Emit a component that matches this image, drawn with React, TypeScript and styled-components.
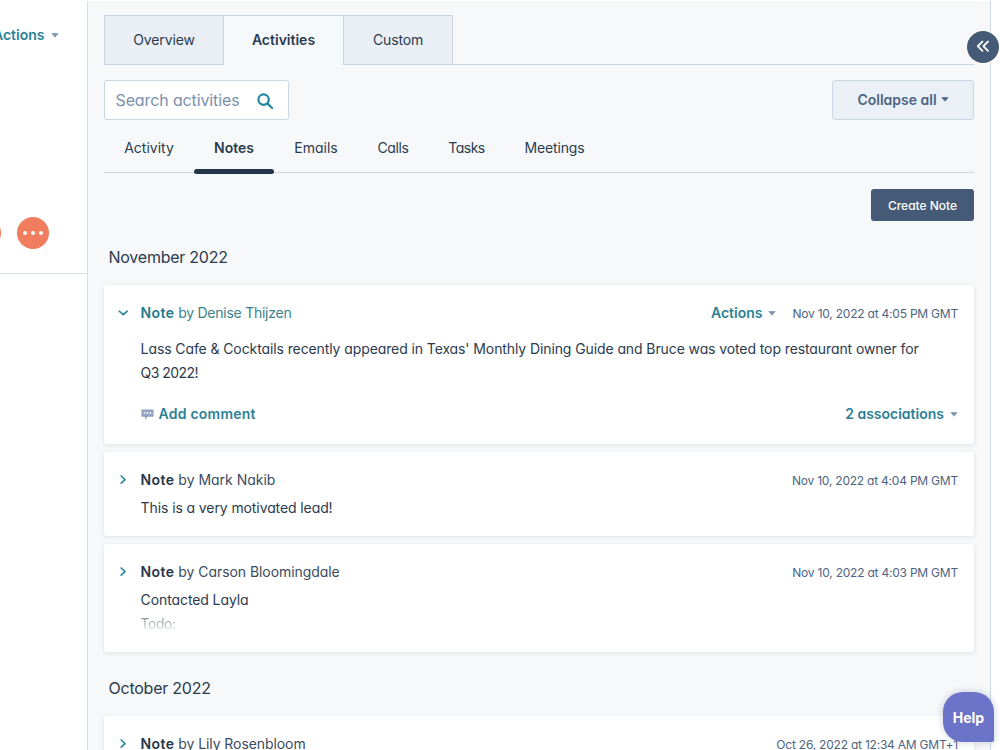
import React from 'react';
import styled, { createGlobalStyle } from 'styled-components';

const Global = createGlobalStyle`
  * { box-sizing: border-box; }
  html, body { margin: 0; height: 100%; overflow: hidden; }
  body {
    background: #fff;
    color: #33475b;
    font-family: Inter, "Liberation Sans", sans-serif;
    font-size: 14px;
    font-feature-settings: 'cv11';
  }
  button, input { font: inherit; font-feature-settings: inherit; color: inherit; }
`;

const dark = '#2b3b4e';
const teal = '#2b8196';

const Page = styled.div`
  display: flex;
  width: 1000px;
  height: 750px;
  overflow: hidden;
  position: relative;
`;

const Sidebar = styled.aside`
  width: 87px;
  flex: none;
  display: flex;
  flex-direction: column;
  background: #fff;
`;

const SidebarTop = styled.div`
  height: 274px;
  border-bottom: 1px solid #d9e0e8;
  display: flex;
  flex-direction: column;
  justify-content: space-between;
  padding: 25px 0 24px;
  overflow: hidden;
`;

const SidebarActions = styled.div`
  display: flex;
  width: 58.5px;
  justify-content: flex-end;
`;

const RoundActions = styled.div`
  display: flex;
  gap: 16px;
  margin-left: -31px;
`;

const RoundButton = styled.button`
  width: 32px;
  height: 32px;
  flex: none;
  padding: 0;
  border: 0;
  border-radius: 50%;
  background: #f07d5e;
  display: flex;
  align-items: center;
  justify-content: center;
  gap: 4px;
`;

const Dot = styled.span`
  width: 4px;
  height: 4px;
  border-radius: 50%;
  background: #fff;
`;

const Main = styled.main`
  width: 904px;
  flex: none;
  margin-top: 1px;
  border-left: 1px solid #d5dce6;
  border-right: 1px solid #cdd6e2;
  background: #f6f8fa;
  padding: 14px 16px 0;
  display: flex;
  flex-direction: column;
`;

const Tabs = styled.nav`
  display: flex;
  flex: none;
  height: 50px;
  border-left: 1px solid #cbd5e2;
`;

const Tab = styled.button<{ $w: number; $active?: boolean; $track?: number }>`
  width: ${p => p.$w}px;
  padding: ${p => (p.$active ? '0 0 2px' : '0 0 1px')};
  border: solid #cbd5e2;
  border-width: ${p => (p.$active ? '1px 1px 0 0' : '1px 1px 1px 0')};
  background: ${p => (p.$active ? '#f6f9fb' : '#eaeff6')};
  color: ${dark};
  font-weight: ${p => (p.$active ? 600 : 400)};
  letter-spacing: ${p => p.$track || 0}px;
`;

const TabFill = styled.div`
  flex: 1;
  border-bottom: 1px solid #cbd5e2;
`;

const Toolbar = styled.div`
  display: flex;
  flex: none;
  justify-content: space-between;
  margin-top: 15px;
`;

const Search = styled.label`
  width: 185px;
  height: 40px;
  border: 1px solid #cbd6e2;
  border-radius: 3px;
  background: #fff;
  display: flex;
  align-items: center;
  justify-content: space-between;
  padding: 0 14px 0 10.5px;
  color: #7c90ab;
  font-size: 16px;
  letter-spacing: -0.12px;
`;

const CollapseButton = styled.button`
  width: 142px;
  height: 40px;
  padding: 0 0 1px;
  border: 1px solid #cbd6e2;
  border-radius: 3px;
  background: #ebf0f6;
  color: #4c6585;
  font-weight: 600;
  display: flex;
  align-items: center;
  justify-content: center;
  gap: 4px;
`;

const Subtabs = styled.nav`
  display: flex;
  flex: none;
  height: 53px;
  border-bottom: 1px solid #cdd6e2;
`;

const Subtab = styled.button<{ $w: number; $active?: boolean; $track?: number }>`
  width: ${p => p.$w}px;
  height: 54px;
  padding: 19px 0 0;
  border: 0;
  background: none;
  color: ${dark};
  font-weight: ${p => (p.$active ? 600 : 400)};
  line-height: 17px;
  letter-spacing: ${p => p.$track || 0}px;
  display: flex;
  flex-direction: column;
  justify-content: space-between;
  align-items: center;
  &::after {
    content: '';
    align-self: stretch;
    height: 5px;
    border-radius: 3px;
    background: ${p => (p.$active ? '#26364a' : 'transparent')};
  }
`;

const CreateRow = styled.div`
  display: flex;
  flex: none;
  justify-content: flex-end;
  margin-top: 16px;
`;

const CreateButton = styled.button`
  width: 103px;
  height: 32px;
  padding: 0;
  border: 0;
  border-radius: 3px;
  background: #455a76;
  color: #fff;
  font-size: 12px;
  font-weight: 500;
`;

const Month = styled.h2<{ $first?: boolean }>`
  flex: none;
  margin: ${p => (p.$first ? '24px' : '16px')} 0 15px 4.5px;
  font-size: 16px;
  line-height: 25px;
  font-weight: 400;
  letter-spacing: -0.24px;
  color: ${dark};
`;

const Card = styled.article<{ $h: number }>`
  flex: none;
  height: ${p => p.$h}px;
  margin-bottom: 8px;
  padding: 16px 16px 0 36.6px;
  border-radius: 3px;
  background: #fff;
  box-shadow: 0 1px 4px rgba(45, 62, 80, 0.12);
`;

const CardHead = styled.header`
  display: flex;
  align-items: center;
  height: 24px;
  margin-left: -24.6px;
`;

const Chevron = styled.svg`
  width: 12px;
  height: 12px;
  margin-right: 12.6px;
  flex: none;
`;

const Title = styled.div<{ $open?: boolean; $track: number }>`
  flex: 1;
  line-height: 18px;
  padding-bottom: 1px;
  color: ${p => (p.$open ? '#3c7f8e' : '#3b4b5e')};
  letter-spacing: ${p => p.$track}px;
  strong {
    font-weight: 600;
    letter-spacing: 0.4px;
    color: ${p => (p.$open ? '#24798a' : '#26364a')};
  }
`;

const Link = styled.a<{ $track?: number; $gap?: number }>`
  display: inline-flex;
  align-items: center;
  gap: ${p => p.$gap || 6}px;
  color: ${teal};
  font-weight: 600;
  line-height: 20px;
  letter-spacing: ${p => p.$track || 0}px;
`;

const Time = styled.time`
  margin-left: 16px;
  font-size: 12px;
  line-height: 16px;
  padding-top: 1px;
  letter-spacing: -0.22px;
  color: #4c6482;
`;

const Body = styled.p<{ $gap: number }>`
  margin: ${p => p.$gap}px 0 0;
  line-height: 24px;
  letter-spacing: -0.1px;
  color: ${dark};
`;

const Tight = styled.span`
  letter-spacing: -0.55px;
`;

const Faded = styled.span`
  background: linear-gradient(#8d949d 20%, #d9dcdf 80%);
  background-clip: text;
  color: transparent;
  letter-spacing: -0.5px;
`;

const CardFoot = styled.footer`
  display: flex;
  justify-content: space-between;
  margin-top: 19px;
`;

const CollapseBadge = styled.button`
  position: absolute;
  left: 967px;
  top: 31px;
  width: 32px;
  height: 32px;
  padding: 0;
  border: 0;
  border-radius: 50%;
  background: #455a76;
  box-shadow: 0 0 0 1px #fff;
  display: grid;
  place-items: center;
`;

const HelpButton = styled.button`
  position: absolute;
  left: 943px;
  top: 692px;
  width: 51px;
  height: 50px;
  padding: 0;
  border: 0;
  border-radius: 20px 20px 2px 20px;
  background: #6b73c9;
  box-shadow: 0 0 6px 1px rgba(60, 75, 110, 0.22);
  color: #fff;
  font-weight: 700;
`;

const Caret = ({ color = '#7d93ae' }: { color?: string }) => (
  <svg width="8" height="5" viewBox="0 0 8 5">
    <path d="M.8.5h6.4L4 4.3z" fill={color} stroke={color} strokeWidth=".6" strokeLinejoin="round" />
  </svg>
);

const Arrow = ({ open }: { open?: boolean }) => (
  <Chevron viewBox="0 0 12 12" fill="none" stroke="#2b8aa0" strokeWidth="1.7" strokeLinecap="round" strokeLinejoin="round">
    <path d={open ? 'M3.2 4.2 7.3 7.6 11.2 4.2' : 'M5.2 2 9 5.6 5.2 9.2'} />
  </Chevron>
);

type NoteProps = {
  author: string;
  time: string;
  height: number;
  track: number;
  open?: boolean;
  children?: React.ReactNode;
};

const Note = ({ author, time, height, track, open, children }: NoteProps) => (
  <Card $h={height}>
    <CardHead>
      <Arrow open={open} />
      <Title $open={open} $track={track}>
        <strong>Note</strong> by {author}
      </Title>
      {open && <Link>Actions <Caret /></Link>}
      <Time>{time}</Time>
    </CardHead>
    {children}
  </Card>
);

export default function App() {
  return (
    <Page>
      <Global />
      <Sidebar>
        <SidebarTop>
          <SidebarActions><Link>Actions <Caret /></Link></SidebarActions>
          <RoundActions>
            <RoundButton />
            <RoundButton><Dot /><Dot /><Dot /></RoundButton>
          </RoundActions>
        </SidebarTop>
      </Sidebar>
      <Main>
        <Tabs>
          <Tab $w={119} $track={-0.13}>Overview</Tab>
          <Tab $w={120} $active>Activities</Tab>
          <Tab $w={109} $track={-0.15}>Custom</Tab>
          <TabFill />
        </Tabs>
        <Toolbar>
          <Search>
            Search activities
            <svg width="18" height="18" viewBox="0 0 18 18" fill="none" stroke="#23879d" strokeWidth="2.2" strokeLinecap="round">
              <circle cx="7.6" cy="8.6" r="5.2" />
              <path d="m11.6 12.6 4.5 4.4" />
            </svg>
          </Search>
          <CollapseButton>Collapse all <Caret color="#4c6585" /></CollapseButton>
        </Toolbar>
        <Subtabs>
          <Subtab $w={90}>Activity</Subtab>
          <Subtab $w={80} $active>Notes</Subtab>
          <Subtab $w={84}>Emails</Subtab>
          <Subtab $w={70} $track={-0.35}>Calls</Subtab>
          <Subtab $w={77} $track={-0.5}>Tasks</Subtab>
          <Subtab $w={99} $track={-0.15}>Meetings</Subtab>
        </Subtabs>
        <CreateRow><CreateButton>Create Note</CreateButton></CreateRow>
        <Month $first>November 2022</Month>
        <Note open author="Denise Thijzen" time="Nov 10, 2022 at 4:05 PM GMT" height={159} track={-0.25}>
          <Body $gap={12}>
            Lass Cafe &amp; Cocktails recently appeared in Texas' Monthly Dining Guide and Bruce was voted top restaurant owner for
            <br />
            <Tight>Q3 2022!</Tight>
          </Body>
          <CardFoot>
            <Link $track={0.22} $gap={5}>
              <svg width="13" height="12" viewBox="0 0 13 12">
                <path d="M1 1.5h11a.6.6 0 0 1 .6.6v6a.6.6 0 0 1-.6.6H6.6L4 11.8V8.7H1a.6.6 0 0 1-.6-.6v-6a.6.6 0 0 1 .6-.6z" fill="#94a3bf" />
                <path d="M2.8 4.3h1.6v1.5H2.8zM5.7 4.3h1.6v1.5H5.7zM8.6 4.3h1.6v1.5H8.6z" fill="#fff" />
              </svg>
              Add comment
            </Link>
            <Link>2 associations <Caret /></Link>
          </CardFoot>
        </Note>
        <Note author="Mark Nakib" time="Nov 10, 2022 at 4:04 PM GMT" height={84} track={-0.02}>
          <Body $gap={4}>This is a very motivated lead!</Body>
        </Note>
        <Note author="Carson Bloomingdale" time="Nov 10, 2022 at 4:03 PM GMT" height={108} track={-0.06}>
          <Body $gap={4}>Contacted Layla<br /><Faded>Todo:</Faded></Body>
        </Note>
        <Month>October 2022</Month>
        <Note author="Lily Rosenbloom" time="Oct 26, 2022 at 12:34 AM GMT+1" height={84} track={-0.08} />
      </Main>
      <CollapseBadge aria-label="Collapse sidebar">
        <svg width="14" height="14" viewBox="0 0 14 14" fill="none" stroke="#fff" strokeWidth="1.9" strokeLinecap="round" strokeLinejoin="round">
          <path d="M6.4 1.6 1.8 6.2l4.6 4.6M12 1.6 7.4 6.2l4.6 4.6" />
        </svg>
      </CollapseBadge>
      <HelpButton>Help</HelpButton>
    </Page>
  );
}
